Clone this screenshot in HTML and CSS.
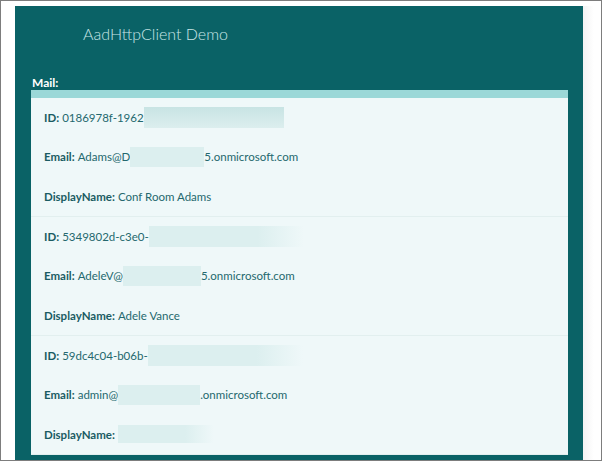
FILE: index.html
```html
<!DOCTYPE html>
<html lang="en">
<head>
<meta charset="utf-8">
<title>AadHttpClient Demo</title>
<link rel="stylesheet" href="styles.css">
</head>
<body>
<div class="frame">
  <div class="panel">
    <div class="title">AadHttpClient Demo</div>
    <div class="section-label">Mail:</div>
    <div class="list">
      <div class="item">
        <div class="row"><span class="label">ID:</span><span class="value">0186978f-1962</span><span class="redact r-id"></span></div>
        <div class="row"><span class="label">Email:</span><span class="value">Adams@D</span><span class="redact r-mail1"></span><span class="value-tail">5.onmicrosoft.com</span></div>
        <div class="row"><span class="label">DisplayName:</span><span class="value">Conf Room Adams</span></div>
      </div>
      <div class="item">
        <div class="row"><span class="label">ID:</span><span class="value">5349802d-c3e0-</span><span class="redact r-id2"></span></div>
        <div class="row"><span class="label">Email:</span><span class="value">AdeleV@</span><span class="redact r-mail2"></span><span class="value-tail">5.onmicrosoft.com</span></div>
        <div class="row"><span class="label">DisplayName:</span><span class="value">Adele Vance</span></div>
      </div>
      <div class="item">
        <div class="row"><span class="label">ID:</span><span class="value">59dc4c04-b06b-</span><span class="redact r-id2"></span></div>
        <div class="row"><span class="label">Email:</span><span class="value">admin@</span><span class="redact r-mail3"></span><span class="value-tail">.onmicrosoft.com</span></div>
        <div class="row"><span class="label">DisplayName:</span><span class="redact r-name"></span></div>
      </div>
    </div>
  </div>
  <div class="side"></div>
</div>
</body>
</html>
```
FILE: styles.css
```css
* { box-sizing: border-box; }
html, body { margin: 0; padding: 0; }
body {
  width: 602px;
  height: 461px;
  overflow: hidden;
  background: #ffffff;
  font-family: "Lato", "Open Sans", sans-serif;
}
.frame {
  width: 602px;
  height: 461px;
  border: 1px solid #7d7d7d;
  display: flex;
  padding: 5px 0 0 14px;
  overflow: hidden;
}
.panel {
  width: 568px;
  flex: 0 0 568px;
  height: 470px;
  background: #0a6266;
  padding: 0 15px 0 16px;
  display: flex;
  flex-direction: column;
}
.side {
  flex: 1;
  background: linear-gradient(to right, #f3f3f3, #ffffff 60%);
}
.title {
  height: 70px;
  padding-left: 52px;
  padding-top: 18px;
  color: #c9e6e6;
  font-size: 16px;
  font-weight: 300;
  line-height: 20px;
}
.section-label {
  color: #ffffff;
  font-weight: 700;
  font-size: 12px;
  line-height: 14px;
  height: 14px;
  padding-left: 1px;
}
.list {
  background: #eff8f9;
  border-top: 8px solid #9bd8d8;
}
.item {
  border-bottom: 1px solid #e2efef;
  padding-left: 13px;
}
.row {
  height: 39.33px;
  display: flex;
  align-items: center;
  font-size: 11.5px;
  color: #22666c;
  white-space: nowrap;
}
.label {
  font-weight: 700;
  color: #1a5c63;
  margin-right: 3px;
}
.value, .value-tail { color: #24686e; }
.redact {
  display: inline-block;
  height: 21px;
  background: linear-gradient(to bottom, #c8e4e4, #dceeee);
}
.r-id { width: 140px; }
.r-id2 { width: 155px; background: linear-gradient(to right, #dcefef 70%, #eff8f9); }
.r-mail1 { width: 74px; height: 20px; background: #dcefef; }
.r-mail2 { width: 78px; height: 20px; background: #dcefef; }
.r-mail3 { width: 82px; height: 20px; background: #dcefef; }
.r-name { width: 96px; height: 18px; background: linear-gradient(to right, #dcefef 70%, #eff8f9); }
```
